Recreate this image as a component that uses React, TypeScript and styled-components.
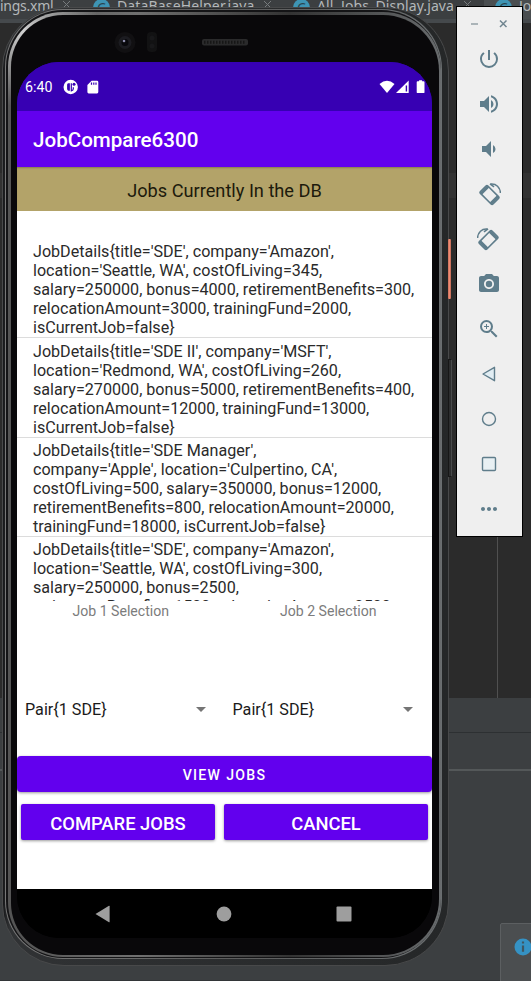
import React from 'react';
import styled, { createGlobalStyle } from 'styled-components';
import {
  MdPowerSettingsNew, MdVolumeUp, MdVolumeDown, MdCameraAlt, MdZoomIn, MdMoreHoriz,
} from 'react-icons/md';

const Global = createGlobalStyle`
  * { box-sizing: border-box; }
  body { margin: 0; background: #3c3f41; overflow: hidden; }
`;

const Desktop = styled.div`
  position: relative;
  width: 531px;
  height: 981px;
  overflow: hidden;
  font-family: Roboto, sans-serif;
`;

/* ---------- IDE behind the emulator ---------- */
const Ide = styled.div`
  height: 100%;
  display: flex;
  flex-direction: column;
  background: #3c3f41;
`;
const TabStrip = styled.div`
  height: 23px;
  flex: none;
  display: flex;
  overflow: hidden;
  background: #3c3f41;
  border-bottom: 4px solid #45494c;
`;
const Tab = styled.div<{ $w: number; $first?: boolean; $active?: boolean }>`
  width: ${p => p.$w}px;
  flex: none;
  height: 19px;
  display: flex;
  align-items: flex-start;
  background: ${p => (p.$active ? '#4a4e50' : 'transparent')};
  padding-left: ${p => (p.$first ? 0 : 11)}px;
`;
const TabName = styled.span<{ $w: number; $space: number }>`
  width: ${p => p.$w}px;
  flex: none;
  margin-top: -5px;
  font: 14px/22px 'Noto Sans', sans-serif;
  letter-spacing: ${p => p.$space}px;
  color: #b4b8ba;
  white-space: nowrap;
`;
const ClassBadge = styled.span`
  width: 17px;
  height: 17px;
  flex: none;
  margin: -1px 7px 0 0;
  border-radius: 50%;
  background: #3e94b4;
  color: #28444f;
  font: 14px/17px 'Noto Sans', sans-serif;
  text-align: center;
`;
const TabClose = styled.svg`
  width: 9px;
  height: 9px;
  stroke: #777b7d;
  fill: none;
`;
const Editor = styled.div`
  flex: 1;
  display: flex;
  flex-direction: column;
  padding-top: 150px;
  background: linear-gradient(90deg, #2b2b2b 497px, #505050 497px, #505050 498px, #2b2b2b 498px);
`;
const CaretLine = styled.div`
  height: 25px;
  background: #323232;
`;
const BottomTool = styled.div`
  height: 283px;
  flex: none;
  display: flex;
  flex-direction: column;
  border-bottom: 1px solid #323537;
`;
const ToolHeader = styled.div`
  height: 35px;
  border-bottom: 1px solid #2d3032;
`;
const ToolTabs = styled.div`
  height: 38px;
  border-bottom: 2px solid #545859;
`;
const Notice = styled.div`
  position: absolute;
  left: 500px;
  top: 923px;
  width: 40px;
  height: 60px;
  padding: 14px 0 0 13px;
  background: #4b4e50;
  border: 1px solid #5c5f61;
  border-radius: 2px;
`;

/* ---------- Phone ---------- */
const Phone = styled.div`
  position: absolute;
  left: 2px;
  top: 7px;
  width: 447px;
  height: 959px;
  padding: 1px 6px 6px 2px;
  border: 1px solid #48494a;
  border-radius: 62px 64px 64px 62px;
  background: linear-gradient(90deg, #17181a, #303234 1.5%, #252728);
`;
const Rail = styled.div`
  height: 100%;
  padding: 1px;
  border-radius: 58px 60px 60px 58px;
  background: linear-gradient(90deg, #777 0 3%, #5c5c5c 50%, #6a6e70);
`;
const Groove = styled.div`
  height: 100%;
  padding: 2px 0 1px 2px;
  border-radius: 57px 60px 60px 57px;
  background: #141416;
`;
const Rim = styled.div`
  height: 100%;
  padding: 3px 2px 2px 3px;
  border-radius: 55px 58px 58px 55px;
  background:
    radial-gradient(circle at 16px 20px, #d0d0d0 0, rgba(190, 190, 190, 0.7) 28px, transparent 75px),
    linear-gradient(90deg, #555 0 2%, #707070 30%, #333 65%, #686b6d);
`;
const Glass = styled.div`
  height: 100%;
  padding: 0 7px 0 6px;
  border-radius: 52px 56px 56px 52px;
  background: #09080a;
  display: flex;
  flex-direction: column;
  align-items: flex-start;
`;
const Sensors = styled.svg`
  flex: none;
  width: 415px;
  height: 47px;
  display: block;
`;
const SideKey = styled.div<{ $top: number; $h: number; $power?: boolean }>`
  position: absolute;
  left: 448px;
  top: ${p => p.$top}px;
  width: ${p => (p.$power ? 3 : 4)}px;
  height: ${p => p.$h}px;
  border-radius: 1px;
  background: ${p => (p.$power ? 'linear-gradient(90deg,#c96f5b,#ed8a72,#bd6855)' : '#2d2e2f')};
  border: ${p => (p.$power ? 'none' : '1px solid #171717')};
  border-right-color: #484a4b;
`;
const Screen = styled.div`
  width: 415px;
  height: 876px;
  flex: none;
  display: flex;
  flex-direction: column;
  overflow: hidden;
  border-radius: 42px;
  background: linear-gradient(#3700b3 60px, #fff 60px, #fff 827px, #000 827px);
`;
const StatusBar = styled.div`
  height: 49px;
  flex: none;
  display: flex;
  align-items: center;
  padding: 1px 7px 0 8px;
  background: #3700b3;
  color: #fff;
  font-size: 14.2px;
`;
const Clock = styled.span`
  width: 38px;
`;
const StatusLeft = styled.svg`
  width: 38px;
  height: 16px;
  margin-right: auto;
`;
const StatusRight = styled.svg`
  width: 46px;
  height: 14px;
`;
const AppBar = styled.header`
  height: 56px;
  flex: none;
  display: flex;
  align-items: center;
  padding: 2px 16px 0;
  background: #6200ee;
  color: #fff;
  font-size: 20.6px;
  font-weight: 500;
`;
const Heading = styled.h1`
  margin: 0;
  height: 44px;
  flex: none;
  background: #b3a369;
  box-shadow: inset 0 2px 2px -1px rgba(0, 0, 0, 0.25);
  color: #1c1a0c;
  font-size: 18.2px;
  font-weight: 400;
  line-height: 47px;
  text-align: center;
`;
const JobList = styled.div`
  height: 362px;
  flex: none;
  margin-top: 28px;
  overflow: hidden;
`;
const JobRow = styled.div`
  height: 99.4px;
  padding: 3.2px 16px 0;
  border-bottom: 1px solid #dcdcdc;
  color: #2a2a2a;
  font-size: 16.12px;
  line-height: 19px;
  white-space: pre;
`;
const Pickers = styled.div`
  height: 155px;
  flex: none;
  display: grid;
  grid-template-columns: 207.5px 207.5px;
`;
const Picker = styled.div`
  display: flex;
  flex-direction: column;
`;
const PickerLabel = styled.div`
  height: 96px;
  padding-top: 1px;
  font-size: 14.1px;
  line-height: 18px;
  text-align: center;
  color: #7c7c7c;
`;
const PickerValue = styled.div`
  height: 24px;
  display: flex;
  align-items: center;
  justify-content: space-between;
  padding: 0 19px 0 8px;
  color: #1a1a1a;
  font-size: 16.15px;
`;
const Caret = styled.svg`
  width: 10px;
  height: 5px;
  fill: #757575;
`;
const Button = styled.button<{ $wide?: boolean }>`
  height: 36px;
  padding: 2px 0 0;
  border: 0;
  border-radius: ${p => (p.$wide ? 4 : 2)}px;
  background: #6200ee;
  color: #fff;
  font-family: inherit;
  font-weight: 500;
  font-size: ${p => (p.$wide ? 14.1 : 18.4)}px;
  letter-spacing: ${p => (p.$wide ? 1.3 : 0)}px;
  box-shadow: 0 1px 3px rgba(0, 0, 0, 0.4);
  flex: none;
`;
const Actions = styled.div`
  display: grid;
  grid-template-columns: 194px 204px;
  gap: 9px;
  padding: 12px 4px 0;
  height: 97px;
  flex: none;
`;
const NavBar = styled.nav`
  flex: 1;
  display: flex;
  align-items: center;
  justify-content: space-between;
  padding: 0 80px 0 78px;
  background: #000;
`;
const NavIcon = styled.svg`
  width: 16px;
  height: 18px;
  fill: #9e9e9e;
`;

/* ---------- Emulator controls ---------- */
const Controls = styled.aside`
  position: absolute;
  left: 456px;
  top: 6px;
  width: 67px;
  height: 531px;
  display: flex;
  flex-direction: column;
  align-items: flex-start;
  background: #efefef;
  border: 1px solid #000;
  color: #5f7d8b;
`;
const WindowButtons = styled.div`
  height: 29px;
  width: 100%;
  flex: none;
`;
const Control = styled.div`
  width: 24px;
  height: 45px;
  margin-left: 20px;
  flex: none;
  display: flex;
  align-items: center;
  justify-content: center;
`;
const Glyph = styled.svg`
  width: 24px;
  height: 24px;
  fill: none;
  stroke: currentColor;
`;

const jobs = [
  `JobDetails{title='SDE', company='Amazon',
location='Seattle, WA', costOfLiving=345,
salary=250000, bonus=4000, retirementBenefits=300,
relocationAmount=3000, trainingFund=2000,
isCurrentJob=false}`,
  `JobDetails{title='SDE II', company='MSFT',
location='Redmond, WA', costOfLiving=260,
salary=270000, bonus=5000, retirementBenefits=400,
relocationAmount=12000, trainingFund=13000,
isCurrentJob=false}`,
  `JobDetails{title='SDE Manager',
company='Apple', location='Culpertino, CA',
costOfLiving=500, salary=350000, bonus=12000,
retirementBenefits=800, relocationAmount=20000,
trainingFund=18000, isCurrentJob=false}`,
  `JobDetails{title='SDE', company='Amazon',
location='Seattle, WA', costOfLiving=300,
salary=250000, bonus=2500,
retirementBenefits=1500, relocationAmount=2500,`,
];

const CloseMark = () => (
  <TabClose viewBox="0 0 9 9"><path d="M1 1l7 7M8 1L1 8" /></TabClose>
);

/* A tilted handset with solid end caps and the turning arrow above its corner. */
const RotateGlyph = ({ right }: { right?: boolean }) => (
  <Glyph viewBox="0 0 24 24">
    <g transform={right ? 'translate(23 0) scale(-1 1)' : 'translate(1 0)'}>
      <g transform="rotate(-45 11.5 13)">
        <rect x="6.300" y="4.200" width="10.400" height="17.600" rx="1.300" strokeWidth="1.600" />
        <path d="M6.300 6h10.400M6.300 20h10.400" strokeWidth="3" />
      </g>
      <path d="M12.500 2C18.200 1.300 22.300 5.500 22.400 11" strokeWidth="1.500" />
      <path d="M12 1.800l4 3" strokeWidth="1.600" />
    </g>
  </Glyph>
);

const SelectionPicker = ({ label }: { label: string }) => (
  <Picker>
    <PickerLabel>{label}</PickerLabel>
    <PickerValue>
      Pair{'{1 SDE}'}
      <Caret viewBox="0 0 10 5"><path d="M0 0h10L5 5z" /></Caret>
    </PickerValue>
  </Picker>
);

export default function App() {
  return (
    <Desktop>
      <Global />
      <Ide>
        <TabStrip>
          <Tab $w={82} $first><TabName $w={62} $space={-0.25}>ings.xml</TabName><CloseMark /></Tab>
          <Tab $w={200}>
            <ClassBadge>C</ClassBadge>
            <TabName $w={146} $space={0.15}>DataBaseHelper.java</TabName><CloseMark />
          </Tab>
          <Tab $w={202}>
            <ClassBadge>C</ClassBadge>
            <TabName $w={146} $space={0.1}>All_Jobs_Display.java</TabName><CloseMark />
          </Tab>
          <Tab $w={60} $active>
            <ClassBadge>C</ClassBadge>
            <TabName $w={30} $space={0}>Jo</TabName>
          </Tab>
        </TabStrip>
        <Editor><CaretLine /></Editor>
        <BottomTool><ToolHeader /><ToolTabs /></BottomTool>
      </Ide>
      <Notice>
        <svg width="18" height="18" viewBox="0 0 18 18">
          <circle cx="9" cy="9" r="8.5" fill="#3592c4" />
          <path d="M9 3.6v2M9 7.4v6.4" stroke="#3f5661" strokeWidth="2.2" />
        </svg>
      </Notice>

      <Phone>
        <Rail><Groove><Rim><Glass>
          <Sensors viewBox="17 15 415 47">
            <circle cx="125" cy="42.500" r="10.500" fill="#111012" />
            <circle cx="125" cy="42.500" r="6.500" fill="#1c1c21" />
            <circle cx="125" cy="42.500" r="3.500" fill="#08080c" />
            <circle cx="124" cy="41" r="1.300" fill="#8c8cab" />
            <rect x="147" y="32" width="10" height="20" rx="4" fill="#121213" />
            <circle cx="152" cy="38" r="2.500" fill="#18181a" />
            <circle cx="152" cy="46" r="2.500" fill="#18181a" />
            <rect x="202" y="39" width="46" height="6.500" rx="2" fill="#2a2a2b" />
            <path d="M204 42.200h42" stroke="#161616" strokeWidth="3" strokeDasharray="1.500 1.500" />
          </Sensors>
          <Screen>
            <StatusBar>
              <Clock>6:40</Clock>
              <StatusLeft viewBox="0 0 38 16">
                <circle cx="7.700" cy="8" r="7.200" fill="#fff" />
                <path d="M5.300 4.200h1.600v7.600H5.300q-1.200-.3-1.200-2V6q0-1.500 1.200-1.800z" fill="#3700b3" />
                <path d="M8.300 4.200v7.600q2-.2 2-2V8.200" stroke="#3700b3" strokeWidth="1.200" fill="none" />
                <circle cx="11" cy="5.300" r="1.500" fill="#3700b3" />
                <path d="M28.600 1.800H34a1.300 1.300 0 0 1 1.300 1.300v10a1.300 1.300 0 0 1-1.300 1.300h-8.300a1.300 1.300 0 0 1-1.300-1.300V6z" fill="#fff" />
                <path d="M28.500 3.400v2.400M30.800 3.400v2.400M33 3.400v2.400" stroke="#3700b3" strokeWidth="1.200" />
              </StatusLeft>
              <StatusRight viewBox="0 0 46 14">
                <path d="M.5 4Q8-2.500 15.500 4L8 13z" fill="#fff" />
                <path d="M17 13L29.700.6V13z" fill="#fff" />
                <path d="M26.700 5.500h1.400v6h-1.400z" fill="#3700b3" />
                <path d="M38.600 1.300h1.500V.3h3v1h1.500q.9 0 .9.900v10q0 .9-.9.9h-6q-.9 0-.9-.9v-10q0-.9.900-.9z" fill="#fff" />
              </StatusRight>
            </StatusBar>
            <AppBar>JobCompare6300</AppBar>
            <Heading>Jobs Currently In the DB</Heading>
            <JobList>{jobs.map((job, i) => <JobRow key={i}>{job}</JobRow>)}</JobList>
            <Pickers>
              <SelectionPicker label="Job 1 Selection" />
              <SelectionPicker label="Job 2 Selection" />
            </Pickers>
            <Button $wide>VIEW JOBS</Button>
            <Actions>
              <Button>COMPARE JOBS</Button>
              <Button>CANCEL</Button>
            </Actions>
            <NavBar>
              <NavIcon viewBox="0 0 16 18"><path d="M.5 9L14 .8q.6-.2.600.5v15.400q0 .7-.6.500z" /></NavIcon>
              <NavIcon viewBox="0 0 16 18"><circle cx="8" cy="9" r="7.400" /></NavIcon>
              <NavIcon viewBox="0 0 16 18"><rect x=".5" y="1.500" width="15" height="15" rx="1" /></NavIcon>
            </NavBar>
          </Screen>
        </Glass></Rim></Groove></Rail>
      </Phone>
      <SideKey $top={239} $h={60} $power />
      <SideKey $top={359} $h={118} />

      <Controls>
        <WindowButtons>
          <svg width="65" height="29" viewBox="0 0 65 29" fill="none">
            <path d="M14 17h7" stroke="#9aa5aa" strokeWidth="1.600" />
            <path d="M43 13.500l6.500 6.500M49.500 13.500L43 20" stroke="#708590" strokeWidth="1.500" />
          </svg>
        </WindowButtons>
        <Control><MdPowerSettingsNew size={24} /></Control>
        <Control><MdVolumeUp size={24} /></Control>
        <Control><MdVolumeDown size={24} /></Control>
        <Control><RotateGlyph /></Control>
        <Control><RotateGlyph right /></Control>
        <Control><MdCameraAlt size={24} /></Control>
        <Control><MdZoomIn size={24} /></Control>
        <Control><Glyph viewBox="0 0 24 24"><path d="M6 12L17.500 5.300v13.400z" fill="#e1edf3" strokeWidth="1.400" strokeLinejoin="round" /></Glyph></Control>
        <Control><Glyph viewBox="0 0 24 24"><circle cx="12" cy="12" r="6.500" strokeWidth="1.400" /></Glyph></Control>
        <Control><Glyph viewBox="0 0 24 24"><rect x="5.500" y="5.500" width="13" height="13" rx="1" fill="#e8f0f3" strokeWidth="1.400" /></Glyph></Control>
        <Control><MdMoreHoriz size={24} /></Control>
      </Controls>
    </Desktop>
  );
}
